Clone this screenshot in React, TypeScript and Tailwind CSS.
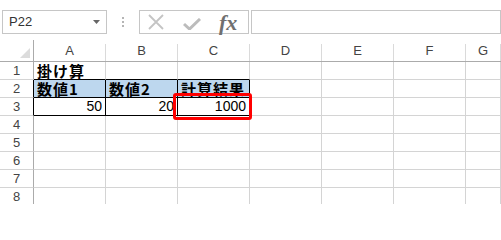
import React from 'react';

const cols = ['A', 'B', 'C', 'D', 'E', 'F', 'G'];
const jp = "font-['Noto_Sans_CJK_JP',sans-serif]";
const num = "font-['Liberation_Sans',Arial,sans-serif]";

type Cell = { text?: string; kind?: 'title' | 'head' | 'num'; box?: boolean };

const data: Record<number, Cell[]> = {
  1: [{ text: '掛け算', kind: 'title' }],
  2: [
    { text: '数値1', kind: 'head' },
    { text: '数値2', kind: 'head' },
    { text: '計算結果', kind: 'head' },
  ],
  3: [
    { text: '50', kind: 'num' },
    { text: '20', kind: 'num' },
    { text: '1000', kind: 'num', box: true },
  ],
};

function Toolbar() {
  return (
    <div className="h-[40px] flex items-start pt-[10px] pl-[2px] bg-white">
      {/* name box */}
      <div className="w-[105px] h-[24px] border border-[#c6c6c6] flex items-center justify-between pl-[6px] pr-[6px]">
        <span className={`${num} text-[13px] text-[#333]`}>P22</span>
        <svg width="7" height="4" viewBox="0 0 7 4">
          <path d="M0 0 H7 L3.5 4 Z" fill="#666" />
        </svg>
      </div>
      {/* grip */}
      <div className="w-[32px] h-[24px] flex flex-col items-center justify-center gap-[2px]">
        <div className="w-[2px] h-[2px] bg-[#b5b5b5]" />
        <div className="w-[2px] h-[2px] bg-[#b5b5b5]" />
        <div className="w-[2px] h-[2px] bg-[#b5b5b5]" />
      </div>
      {/* cancel / enter / fx */}
      <div className="w-[110px] h-[24px] border border-[#c6c6c6] flex items-center">
        <svg className="ml-[8px]" width="16" height="16" viewBox="0 0 16 16">
          <path d="M1 1 L15 15 M15 1 L1 15" stroke="#c4c4c4" strokeWidth="1.8" fill="none" />
        </svg>
        <svg className="ml-[19px] mt-[4px]" width="18" height="12" viewBox="0 0 18 12">
          <path d="M1 6 L6.5 11 L17 1" stroke="#bcbcbc" strokeWidth="3" fill="none" />
        </svg>
        <span className="ml-[18px] mt-[1px] font-['Liberation_Serif',serif] italic font-bold text-[22px] leading-none text-[#707070]">
          fx
        </span>
      </div>
      {/* formula input */}
      <div className="flex-1 ml-[2px] h-[24px] border border-[#c6c6c6]" />
    </div>
  );
}

function Header() {
  return (
    <>
      <div className="h-[22px] border-r border-b border-[#ababab] flex items-end justify-end pb-[3px] pr-[3px]">
        <svg width="10" height="10" viewBox="0 0 10 10">
          <path d="M10 0 V10 H0 Z" fill="#dcdcdc" />
        </svg>
      </div>
      {cols.map((c) => (
        <div key={c} className="h-[22px] border-b border-[#ababab] flex">
          <span className={`${num} flex-1 text-center text-[13px] leading-[22px] text-[#444]`}>{c}</span>
          <div className="w-px h-[17px] self-end bg-[#dadada]" />
        </div>
      ))}
    </>
  );
}

function Row({ n }: { n: number }) {
  const cells = data[n] ?? [];
  const inTable = n === 2 || n === 3;
  return (
    <>
      <div
        className={`h-[18px] border-b border-[#d4d4d4] border-r ${inTable ? 'border-r-black' : 'border-r-[#ababab]'} flex items-center justify-center`}
      >
        <span className={`${num} text-[13px] text-[#444] leading-[18px]`}>{n}</span>
      </div>
      {cols.map((c, i) => {
        const cell = cells[i];
        const tbl = inTable && i < 3;
        const above = n === 1 && i < 3;
        return (
          <div
            key={c}
            className={`relative h-[18px] border-r border-b ${tbl ? 'border-black' : 'border-[#d4d4d4]'} ${above ? 'border-b-black' : ''} ${n === 2 && i < 3 ? 'bg-[#bdd7ee]' : 'bg-white'} flex items-center`}
          >
            {cell?.kind === 'title' && (
              <span className={`${jp} font-bold text-[15px] leading-[17px] text-black pl-[3px] tracking-[1px] whitespace-nowrap`}>{cell.text}</span>
            )}
            {cell?.kind === 'head' && (
              <span className={`${jp} font-bold text-[15px] leading-[17px] text-black pl-[3px] tracking-[1px] whitespace-nowrap`}>{cell.text}</span>
            )}
            {cell?.kind === 'num' && (
              <span className={`${num} w-full text-right text-[14px] leading-[17px] text-black pr-[3px]`}>{cell.text}</span>
            )}
            {cell?.box && (
              <div className="absolute z-10 left-[-5px] top-[-5px] w-[79px] h-[27px] border-[3px] border-[#ff0000] rounded-[3px]" />
            )}
          </div>
        );
      })}
    </>
  );
}

export default function App() {
  return (
    <div className="w-[501px] h-[204px] overflow-hidden bg-white">
      <Toolbar />
      <div className="grid grid-cols-[34px_repeat(6,72px)_1fr]">
        <Header />
        {[1, 2, 3, 4, 5, 6, 7, 8].map((n) => (
          <Row key={n} n={n} />
        ))}
      </div>
    </div>
  );
}
